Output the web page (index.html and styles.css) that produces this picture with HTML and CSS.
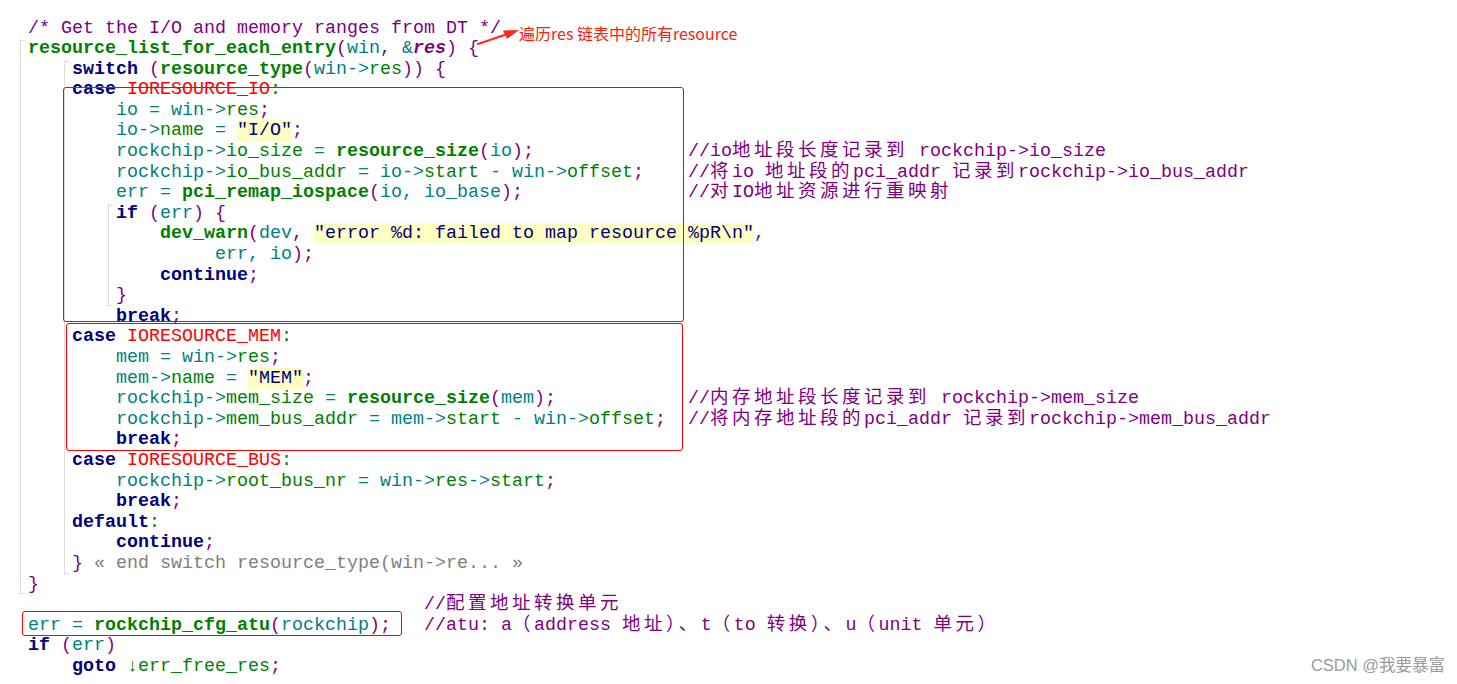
FILE: index.html
```html
<!DOCTYPE html>
<html lang="zh">
<head>
    <meta charset="UTF-8">
    <title>rockchip pcie resources</title>
    <link rel="stylesheet" href="styles.css">
</head>
<body>
    <div class="code">
        <div class="ln"><span class="c">/* Get the I/O and memory ranges from DT */</span></div>
        <div class="blk outer">
            <div class="ln"><span class="fn">resource_list_for_each_entry</span><span class="p">(</span><span class="v">win</span><span class="p">, </span><span class="v">&amp;</span><span class="ri">res</span><span class="p">) {</span></div>
            <div class="blk">
                <div class="ln"><span class="kw">switch</span> <span class="p">(</span><span class="fn">resource_type</span><span class="p">(</span><span class="v">win-&gt;</span><span class="m">res</span><span class="p">)) {</span></div>
                <div class="ln"><span class="kw">case</span> <span class="mac">IORESOURCE_IO</span><span class="m">:</span></div>
                <div class="ln">    <span class="v">io = win-&gt;</span><span class="m">res</span><span class="p">;</span></div>
                <div class="ln">    <span class="v">io-&gt;</span><span class="m">name</span> <span class="v">=</span> <span class="str">"I/O"</span><span class="p">;</span></div>
                <div class="ln"><span class="src">    <span class="v">rockchip-&gt;</span><span class="m">io_size</span> <span class="v">=</span> <span class="fn">resource_size</span><span class="p">(</span><span class="v">io</span><span class="p">);</span></span><span class="c">//io<span class="w">地址段长度记录到</span> rockchip-&gt;io_size</span></div>
                <div class="ln"><span class="src">    <span class="v">rockchip-&gt;</span><span class="m">io_bus_addr</span> <span class="v">= io-&gt;</span><span class="m">start</span> <span class="v">- win-&gt;</span><span class="m">offset</span><span class="p">;</span></span><span class="c">//<span class="w">将</span>io <span class="w">地址段的</span>pci_addr <span class="w">记录到</span>rockchip-&gt;io_bus_addr</span></div>
                <div class="ln"><span class="src">    <span class="v">err =</span> <span class="fn">pci_remap_iospace</span><span class="p">(</span><span class="v">io, io_base</span><span class="p">);</span></span><span class="c">//<span class="w">对</span>IO<span class="w">地址资源进行重映射</span></span></div>
                <div class="blk">
                    <div class="ln"><span class="kw">if</span> <span class="p">(</span><span class="v">err</span><span class="p">) {</span></div>
                    <div class="ln">    <span class="fn">dev_warn</span><span class="p">(</span><span class="v">dev</span><span class="p">, </span><span class="str">"error %d: failed to map resource %pR\n"</span><span class="p">,</span></div>
                    <div class="ln">         <span class="v">err, io</span><span class="p">);</span></div>
                    <div class="ln">    <span class="kw">continue</span><span class="p">;</span></div>
                    <div class="ln"><span class="p">}</span></div>
                </div>
                <div class="ln">    <span class="kw">break</span><span class="p">;</span></div>
                <div class="ln"><span class="kw">case</span> <span class="mac">IORESOURCE_MEM</span><span class="m">:</span></div>
                <div class="ln">    <span class="v">mem = win-&gt;</span><span class="m">res</span><span class="p">;</span></div>
                <div class="ln">    <span class="v">mem-&gt;</span><span class="m">name</span> <span class="v">=</span> <span class="str">"MEM"</span><span class="p">;</span></div>
                <div class="ln"><span class="src">    <span class="v">rockchip-&gt;</span><span class="m">mem_size</span> <span class="v">=</span> <span class="fn">resource_size</span><span class="p">(</span><span class="v">mem</span><span class="p">);</span></span><span class="c">//<span class="w">内存地址段长度记录到</span> rockchip-&gt;mem_size</span></div>
                <div class="ln"><span class="src">    <span class="v">rockchip-&gt;</span><span class="m">mem_bus_addr</span> <span class="v">= mem-&gt;</span><span class="m">start</span> <span class="v">- win-&gt;</span><span class="m">offset</span><span class="p">;</span></span><span class="c">//<span class="w">将内存地址段的</span>pci_addr <span class="w">记录到</span>rockchip-&gt;mem_bus_addr</span></div>
                <div class="ln">    <span class="kw">break</span><span class="p">;</span></div>
                <div class="ln"><span class="kw">case</span> <span class="mac">IORESOURCE_BUS</span><span class="m">:</span></div>
                <div class="ln">    <span class="v">rockchip-&gt;</span><span class="m">root_bus_nr</span> <span class="v">= win-&gt;</span><span class="m">res</span><span class="v">-&gt;</span><span class="m">start</span><span class="p">;</span></div>
                <div class="ln">    <span class="kw">break</span><span class="p">;</span></div>
                <div class="ln"><span class="kw">default</span><span class="m">:</span></div>
                <div class="ln">    <span class="kw">continue</span><span class="p">;</span></div>
                <div class="ln"><span class="p">}</span> <span class="gr">« end switch resource_type(win-&gt;re... »</span></div>
            </div>
            <div class="ln"><span class="p">}</span></div>
        </div>
        <div class="ln">                                    <span class="c">//<span class="w">配置地址转换单元</span></span></div>
        <div class="ln"><span class="src low"><span class="v">err =</span> <span class="fn">rockchip_cfg_atu</span><span class="p">(</span><span class="v">rockchip</span><span class="p">);</span></span><span class="c">//atu: a<span class="w">（</span>address <span class="w">地址）、</span>t<span class="w">（</span>to <span class="w">转换）、</span>u<span class="w">（</span>unit <span class="w">单元）</span></span></div>
        <div class="ln"><span class="kw">if</span> <span class="p">(</span><span class="v">err</span><span class="p">)</span></div>
        <div class="ln">    <span class="kw">goto</span> <span class="m">↓err_free_res</span><span class="p">;</span></div>
    </div>

    <div class="mark box-io"></div>
    <div class="mark box-mem"></div>
    <div class="mark box-atu"></div>

    <svg class="arrow" width="46" height="22" viewBox="0 0 46 22">
        <path d="M2 18 L30 8.5" stroke="#ff2a1a" stroke-width="2" stroke-linecap="round" fill="none"/>
        <path d="M43 4 L27 4.5 L31 13 Z" fill="#ff2a1a"/>
    </svg>
    <div class="note">遍历res 链表中的所有resource</div>

    <div class="watermark">CSDN @我要暴富</div>
</body>
</html>
```

FILE: styles.css
```css
body {
    margin: 0;
    background: #ffffff;
    position: relative;
    width: 1457px;
    height: 684px;
    overflow: hidden;
}

.code {
    padding: 18.5px 0 0 28px;
    font-family: "Liberation Mono", "Noto Sans CJK SC", monospace;
    font-size: 18.33px;
    color: #008080;
}

.ln {
    height: 20.6px;
    line-height: 20.6px;
    white-space: pre;
}

/* block guides */
.blk {
    position: relative;
    margin-left: 36px;
    border-left: 1px solid #dcdcdc;
    padding-left: 7px;
}

.blk.outer {
    margin-left: -8px;
}

.blk::before,
.blk::after {
    content: "";
    position: absolute;
    left: 0;
    width: 4px;
    height: 1px;
    background: #dcdcdc;
}

.blk::before {
    top: 1px;
}

.blk::after {
    bottom: 1px;
}

.src {
    display: inline-block;
    width: 616px;
}

.src.low {
    width: 396px;
}

/* syntax colours */
.kw {
    color: #000080;
    font-weight: bold;
}

.fn {
    color: #008000;
    font-weight: bold;
}

.v {
    color: #008080;
}

.m {
    color: #008000;
}

.p {
    color: #800080;
}

.ri {
    color: #800080;
    font-weight: bold;
    font-style: italic;
}

.mac {
    color: #ff0000;
}

.str {
    color: #000080;
    background: #ffffc4;
}

.c {
    color: #800080;
}

.w {
    font-size: 18.5px;
    letter-spacing: 3.5px;
}

.gr {
    color: #808080;
}

/* annotations */
.mark {
    position: absolute;
    border: 1px solid #ff0000;
    border-radius: 3px;
}

.box-io {
    left: 63px;
    top: 87px;
    width: 619px;
    height: 233px;
}

.box-mem {
    left: 66px;
    top: 323px;
    width: 615px;
    height: 126px;
}

.box-atu {
    left: 22px;
    top: 611px;
    width: 378px;
    height: 23px;
}

.arrow {
    position: absolute;
    left: 476px;
    top: 26px;
}

.note {
    position: absolute;
    left: 519px;
    top: 22px;
    font-family: "Noto Sans CJK SC", sans-serif;
    font-size: 16px;
    line-height: 22px;
    color: #ff1a0a;
}

.watermark {
    position: absolute;
    right: 12px;
    top: 654px;
    font-family: "Liberation Sans", "Noto Sans CJK SC", sans-serif;
    font-size: 16.5px;
    line-height: 22px;
    color: #9a9a9a;
}
```
